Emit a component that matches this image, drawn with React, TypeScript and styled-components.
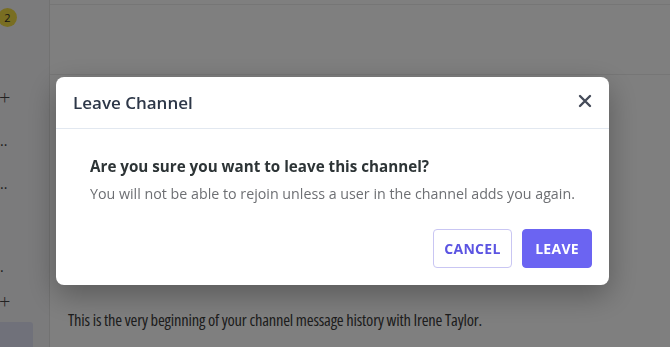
import React from "react";
import styled, { createGlobalStyle } from "styled-components";

const GlobalStyle = createGlobalStyle`
  html, body {
    margin: 0;
    padding: 0;
    background: #ffffff;
  }
  body {
    font-family: "Open Sans", "Noto Sans", sans-serif;
    overflow: hidden;
  }
`;

const Page = styled.div`
  display: flex;
  width: 670px;
  height: 347px;
  background: #ffffff;
`;

const Sidebar = styled.aside`
  width: 49px;
  flex-shrink: 0;
  background: #f7f7f8;
  border-right: 1px solid #e4e4e4;
  display: flex;
  flex-direction: column;
  overflow: hidden;
`;

const Badge = styled.div`
  width: 19px;
  height: 19px;
  margin: 8px 0 0 -2px;
  border-radius: 50%;
  background: #f2dc45;
  color: #2a2a2a;
  font-size: 11px;
  display: flex;
  align-items: center;
  justify-content: center;
`;

const SideRow = styled.div<{ $top: number }>`
  margin-top: ${(p) => p.$top}px;
  height: 16px;
  display: flex;
  align-items: center;
  color: #3a3a3a;
  font-size: 14px;
  line-height: 16px;
  white-space: nowrap;
`;

const PlusIcon = styled.span`
  font-size: 20px;
  font-weight: 300;
  margin-left: -1px;
  color: #444;
`;

const ActiveItem = styled.div`
  margin-top: auto;
  width: 33px;
  height: 25px;
  background: #e0e3f4;
  border-radius: 0 3px 0 0;
`;

const Main = styled.main`
  flex: 1;
  display: flex;
  flex-direction: column;
`;

const TopBar = styled.div`
  height: 4px;
  border-bottom: 1px solid #ececec;
`;

const SubBar = styled.div`
  height: 69px;
  border-bottom: 1px solid #ececec;
`;

const History = styled.div`
  flex: 1;
  display: flex;
  align-items: flex-end;
  padding: 0 0 16px 18px;
`;

const HistoryText = styled.p`
  margin: 0;
  font-size: 16.5px;
  line-height: 22px;
  color: #3b3b3b;
  font-stretch: 80%;
  letter-spacing: -0.2px;
`;

const Overlay = styled.div`
  position: fixed;
  inset: 0;
  background: rgba(0, 0, 0, 0.5);
  padding: 77px 0 0 56px;
  box-sizing: border-box;
`;

const Modal = styled.div`
  width: 553px;
  background: #ffffff;
  border-radius: 8px;
  box-shadow: 0 10px 30px rgba(0, 0, 0, 0.3);
`;

const ModalHeader = styled.div`
  height: 51px;
  padding: 0 17px;
  display: flex;
  align-items: center;
  justify-content: space-between;
  border-bottom: 1px solid #e2e8f0;
`;

const ModalTitle = styled.h2`
  margin: 0;
  font-size: 17px;
  font-weight: 600;
  color: #2d3748;
`;

const CloseButton = styled.button`
  border: none;
  background: none;
  padding: 0;
  width: 20px;
  height: 20px;
  display: flex;
  align-items: center;
  justify-content: center;
  cursor: pointer;
  margin: -3px -3px 0 0;
`;

const ModalBody = styled.div`
  padding: 25px 17px 17px 34px;
`;

const Question = styled.h3`
  margin: 0;
  font-size: 15.2px;
  line-height: 24px;
  font-weight: 700;
  color: #2d3436;
`;

const Description = styled.p`
  margin: 6px 0 0;
  font-size: 14.25px;
  line-height: 20px;
  color: #6d6f73;
`;

const Actions = styled.div`
  display: flex;
  justify-content: flex-end;
  gap: 10px;
  margin-top: 25px;
`;

const Button = styled.button<{ $primary?: boolean }>`
  height: 39px;
  padding: 0 ${(p) => (p.$primary ? 12 : 10.5)}px;
  border-radius: 4px;
  font-family: "Open Sans", "Noto Sans", sans-serif;
  font-size: 14px;
  font-weight: 700;
  letter-spacing: 0.3px;
  text-transform: uppercase;
  cursor: pointer;
  border: 1px solid ${(p) => (p.$primary ? "#6b64f2" : "#c9c6f3")};
  background: ${(p) => (p.$primary ? "#6b64f2" : "#ffffff")};
  color: ${(p) => (p.$primary ? "#ffffff" : "#5b54e2")};
`;

const App: React.FC = () => {
  return (
    <>
      <GlobalStyle />
      <Page>
        <Sidebar>
          <Badge>2</Badge>
          <SideRow $top={63}>
            <PlusIcon>+</PlusIcon>
          </SideRow>
          <SideRow $top={27}>..</SideRow>
          <SideRow $top={27}>..</SideRow>
          <SideRow $top={67}>.</SideRow>
          <SideRow $top={19}>
            <PlusIcon>+</PlusIcon>
          </SideRow>
          <ActiveItem />
        </Sidebar>
        <Main>
          <TopBar />
          <SubBar />
          <History>
            <HistoryText>
              This is the very beginning of your channel message history with
              Irene Taylor.
            </HistoryText>
          </History>
        </Main>
      </Page>
      <Overlay>
        <Modal>
          <ModalHeader>
            <ModalTitle>Leave Channel</ModalTitle>
            <CloseButton aria-label="Close">
              <svg width="14" height="14" viewBox="0 0 14 14">
                <path
                  d="M2 2 L12 12 M12 2 L2 12"
                  stroke="#454b59"
                  strokeWidth="2.4"
                  strokeLinecap="round"
                />
              </svg>
            </CloseButton>
          </ModalHeader>
          <ModalBody>
            <Question>Are you sure you want to leave this channel?</Question>
            <Description>
              You will not be able to rejoin unless a user in the channel adds
              you again.
            </Description>
            <Actions>
              <Button>Cancel</Button>
              <Button $primary>Leave</Button>
            </Actions>
          </ModalBody>
        </Modal>
      </Overlay>
    </>
  );
};

export default App;
